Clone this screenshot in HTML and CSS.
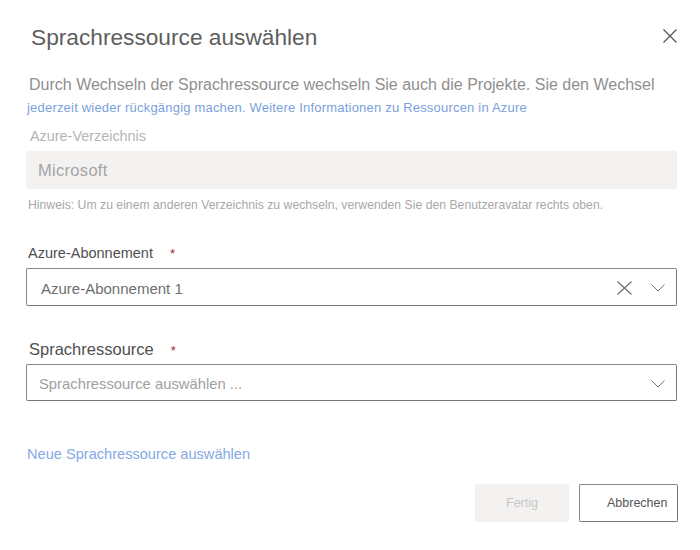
FILE: index.html
```html
<!DOCTYPE html>
<html lang="de">
<head>
<meta charset="utf-8">
<title>Sprachressource auswählen</title>
<link rel="stylesheet" href="styles.css">
</head>
<body>
<div class="dialog">
  <div class="header">
    <h1 class="title">Sprachressource auswählen</h1>
    <button class="close" aria-label="Schließen">
      <svg width="14" height="14" viewBox="0 0 14 14"><path d="M0.5 0.5 L13.5 13.5 M13.5 0.5 L0.5 13.5" stroke="#555" stroke-width="1.3" fill="none"/></svg>
    </button>
  </div>
  <p class="intro">Durch Wechseln der Sprachressource wechseln Sie auch die Projekte. Sie den Wechsel</p>
  <a class="intro-link" href="#">jederzeit wieder rückgängig machen. Weitere Informationen zu Ressourcen in Azure</a>

  <div class="label-muted">Azure-Verzeichnis</div>
  <div class="field-disabled">Microsoft</div>
  <div class="hint">Hinweis: Um zu einem anderen Verzeichnis zu wechseln, verwenden Sie den Benutzeravatar rechts oben.</div>

  <div class="label label-sub">Azure-Abonnement<span class="req">*</span></div>
  <div class="select select-sub">
    <span class="select-value">Azure-Abonnement 1</span>
    <svg class="clear" width="15" height="14" viewBox="0 0 15 14"><path d="M0.5 0.5 L14.5 13.5 M14.5 0.5 L0.5 13.5" stroke="#6a6a6a" stroke-width="1.1" fill="none"/></svg>
    <svg class="chev" width="14" height="8" viewBox="0 0 14 8"><path d="M0.5 0.5 L7 7 L13.5 0.5" stroke="#7a7a7a" stroke-width="1" fill="none"/></svg>
  </div>

  <div class="label label-res">Sprachressource<span class="req">*</span></div>
  <div class="select select-res">
    <span class="select-placeholder">Sprachressource auswählen ...</span>
    <svg class="chev" width="14" height="8" viewBox="0 0 14 8"><path d="M0.5 0.5 L7 7 L13.5 0.5" stroke="#7a7a7a" stroke-width="1" fill="none"/></svg>
  </div>

  <a class="new-link" href="#">Neue Sprachressource auswählen</a>

  <div class="actions">
    <button class="btn btn-primary" disabled>Fertig</button>
    <button class="btn btn-default">Abbrechen</button>
  </div>
</div>
</body>
</html>
```
FILE: styles.css
```css
* { box-sizing: border-box; }
html, body { margin: 0; padding: 0; background: #fff; }
body {
  font-family: "Liberation Sans", Arial, sans-serif;
  width: 700px;
  height: 550px;
  overflow: hidden;
}
.dialog {
  display: flex;
  flex-direction: column;
  padding: 0 23px 0 26px;
}
.header {
  display: flex;
  justify-content: space-between;
  align-items: flex-start;
  margin-top: 24px;
  height: 26px;
}
.title {
  margin: 0 0 0 5px;
  font-size: 22.7px;
  line-height: 26px;
  font-weight: normal;
  color: #5e5e5e;
}
.close {
  margin-top: 5px;
  padding: 0;
  border: 0;
  background: none;
  width: 14px;
  height: 14px;
  display: flex;
}
.intro {
  margin: 24.5px 0 0 3px;
  font-size: 16px;
  line-height: 20px;
  color: #8f8f8f;
  white-space: nowrap;
}
.intro-link {
  margin: 5px 0 0 1px;
  font-size: 13px;
  line-height: 16px;
  letter-spacing: 0.2px;
  color: #7a9fdc;
  text-decoration: none;
  white-space: nowrap;
}
.label-muted {
  margin: 11.5px 0 0 4px;
  font-size: 14.4px;
  line-height: 18px;
  color: #b4b4b4;
}
.field-disabled {
  margin-top: 6px;
  height: 38px;
  line-height: 38px;
  padding-left: 12px;
  background: #f3f2f1;
  border-radius: 2px;
  font-size: 16.5px;
  letter-spacing: 0.3px;
  color: #a4a4a4;
}
.hint {
  margin: 9px 0 0 2px;
  font-size: 12.2px;
  line-height: 15px;
  color: #a8a8a8;
  white-space: nowrap;
  letter-spacing: 0.02px;
}
.label {
  margin-left: 2px;
  color: #4f4f4f;
  white-space: nowrap;
}
.label-sub {
  margin-top: 30.5px;
  font-size: 14.5px;
  line-height: 18px;
}
.label-res {
  margin-top: 32.5px;
  margin-left: 3px;
  font-size: 16.5px;
  line-height: 20px;
}
.req {
  color: #a4262c;
  font-size: 13px;
  margin-left: 17px;
}
.select {
  display: flex;
  align-items: center;
  height: 38px;
  border: 1px solid #8a8886;
  border-right-color: #777;
  border-bottom-color: #777;
  border-radius: 2px;
  padding-right: 11px;
}
.select-sub {
  margin-top: 5.5px;
  padding-left: 14px;
}
.select-res {
  margin-top: 3.5px;
  height: 37px;
  padding-left: 12px;
}
.select-value {
  flex: 1;
  font-size: 15px;
  color: #6e6e6e;
  padding-top: 2px;
}
.select-placeholder {
  flex: 1;
  font-size: 14.8px;
  color: #a0a0a0;
  padding-top: 2px;
}
.clear { margin-right: 19px; margin-top: 1px; }
.chev { margin-top: 2px; }
.new-link {
  margin: 44px 0 0 1px;
  font-size: 14.6px;
  line-height: 18px;
  color: #85a8e4;
  text-decoration: none;
  align-self: flex-start;
}
.actions {
  display: flex;
  justify-content: flex-end;
  gap: 10px;
  margin-top: 20.5px;
  margin-right: -1px;
}
.btn {
  height: 38px;
  border-radius: 2px;
  font-family: "Liberation Sans", Arial, sans-serif;
  font-size: 12.5px;
  padding-top: 2px;
}
.btn-primary {
  width: 94px;
  background: #f3f2f1;
  border: 0;
  color: #c8c6c4;
}
.btn-default {
  width: 99px;
  background: #fff;
  border: 1px solid #8a8886;
  border-right-color: #777;
  border-bottom-color: #777;
  color: #555;
  text-align: left;
  padding-left: 27px;
}
```
